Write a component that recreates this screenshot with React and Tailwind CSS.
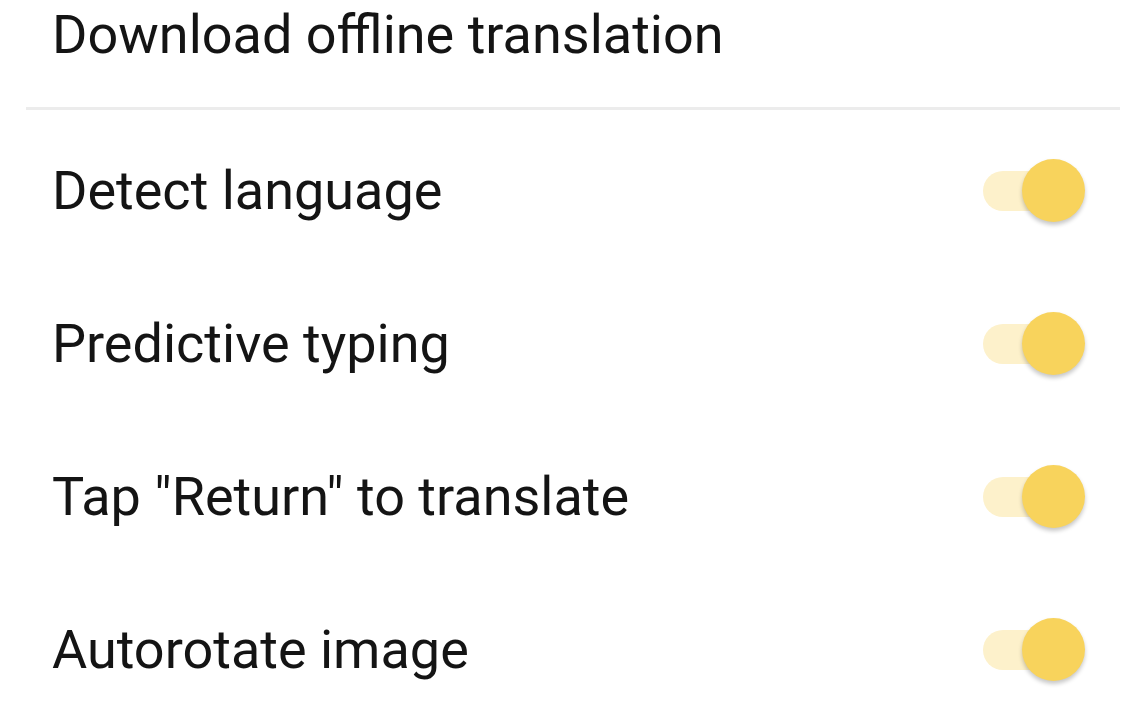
import React, { useState } from 'react';

// --- Toggle ---
const Toggle = ({ on, onChange }) => (
    <button
        type="button"
        onClick={onChange}
        className="relative w-[102px] h-[64px] shrink-0"
    >
        <span className={`absolute left-0 top-[12px] h-[40px] w-[96px] rounded-full ${on ? 'bg-[#fdf1cb]' : 'bg-[#dcdcdc]'}`} />
        <span
            className={`absolute top-0 size-[63px] rounded-full shadow-[0_3px_4px_rgba(0,0,0,0.22)] ${on ? 'right-0 bg-[#f8d35c]' : 'left-0 bg-[#f5f5f5]'}`}
        />
    </button>
);

const settings = ['Detect language', 'Predictive typing', 'Tap "Return" to translate', 'Autorotate image'];

const App = () => {
    const [values, setValues] = useState([true, true, true, true]);

    const flip = (i) => setValues(prev => prev.map((v, j) => (j === i ? !v : v)));

    return (
        <div className="w-[1146px] h-[716px] overflow-hidden bg-white text-[#141414] font-['Roboto',sans-serif]">
            <div className="h-[107px] pl-[52px]">
                <p className="text-[54px] leading-[70px]">Download offline translation</p>
            </div>
            <div className="mx-[26px] h-[3px] bg-[#ececec]" />

            <div className="pt-[4px]">
                {settings.map((label, i) => (
                    <div key={label} className="h-[153px] flex items-center justify-between pl-[52px] pr-[61px]">
                        <span className="text-[54px] leading-none">{label}</span>
                        <Toggle on={values[i]} onChange={() => flip(i)} />
                    </div>
                ))}
            </div>
        </div>
    );
};

export default App;
